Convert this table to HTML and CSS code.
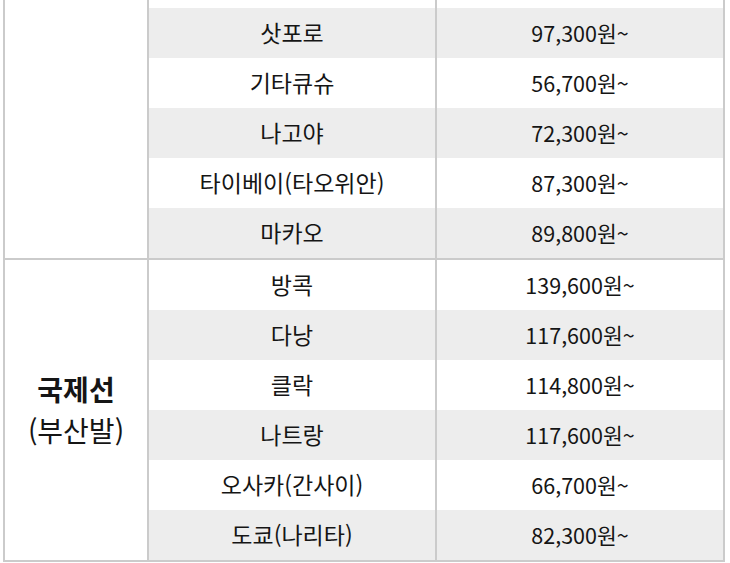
FILE: index.html
```html
<!DOCTYPE html>
<html lang="ko">
<head>
<meta charset="utf-8">
<title>항공권 최저가</title>
<link rel="stylesheet" href="styles.css">
</head>
<body>
<div class="wrap">
<table class="fares">
  <colgroup>
    <col class="c-cat">
    <col class="c-dest">
    <col class="c-price">
  </colgroup>
  <tbody>
    <tr class="partial">
      <td class="cat group-end" rowspan="6"></td>
      <td class="dest"></td>
      <td class="price"></td>
    </tr>
    <tr class="alt"><td class="dest">삿포로</td><td class="price">97,300원~</td></tr>
    <tr><td class="dest">기타큐슈</td><td class="price">56,700원~</td></tr>
    <tr class="alt"><td class="dest">나고야</td><td class="price">72,300원~</td></tr>
    <tr><td class="dest">타이베이(타오위안)</td><td class="price">87,300원~</td></tr>
    <tr class="alt last"><td class="dest">마카오</td><td class="price">89,800원~</td></tr>

    <tr>
      <td class="cat group-end" rowspan="6"><strong>국제선</strong><br>(부산발)</td>
      <td class="dest">방콕</td><td class="price">139,600원~</td>
    </tr>
    <tr class="alt"><td class="dest">다낭</td><td class="price">117,600원~</td></tr>
    <tr><td class="dest">클락</td><td class="price">114,800원~</td></tr>
    <tr class="alt"><td class="dest">나트랑</td><td class="price">117,600원~</td></tr>
    <tr><td class="dest">오사카(간사이)</td><td class="price">66,700원~</td></tr>
    <tr class="alt last"><td class="dest">도쿄(나리타)</td><td class="price">82,300원~</td></tr>
  </tbody>
</table>
</div>
</body>
</html>
```

FILE: styles.css
```css
html, body {
  margin: 0;
  padding: 0;
  background: #ffffff;
}

body {
  font-family: "Noto Sans CJK KR", "Noto Sans", sans-serif;
  color: #151515;
}

.wrap {
  padding-left: 3px;
  width: 722px;
}

.fares {
  border-collapse: separate;
  border-spacing: 0;
  width: 722px;
  table-layout: fixed;
  border-left: 2px solid #cbcbcb;
  border-right: 2px solid #cbcbcb;
}

.c-cat { width: 144px; }
.c-dest { width: 288px; }
.c-price { width: 286px; }

.fares td {
  padding: 0;
  height: 50px;
  text-align: center;
  vertical-align: middle;
  line-height: 1.2;
}

.fares td.dest {
  font-size: 23px;
  border-right: 2px solid #cbcbcb;
}

.fares td.price {
  font-size: 21.5px;
}

.fares tr.partial td {
  height: 8px;
}

.fares td.cat {
  border-right: 2px solid #cbcbcb;
  font-size: 28px;
  line-height: 41px;
  background: #ffffff;
}

.fares td.cat strong {
  font-weight: 700;
}

.fares tr.alt td.dest,
.fares tr.alt td.price {
  background: #ededed;
}

.fares td.group-end,
.fares tr.last td {
  border-bottom: 2px solid #cbcbcb;
}
```
